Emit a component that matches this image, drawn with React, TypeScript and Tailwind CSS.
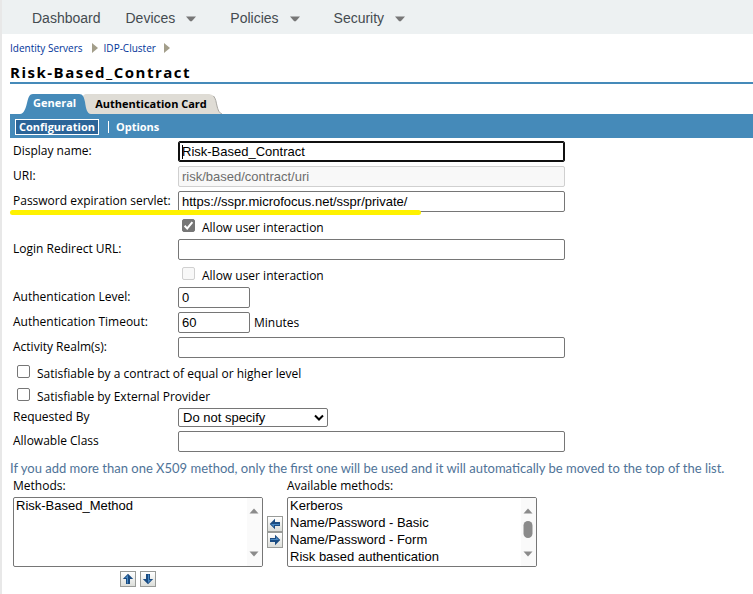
import { useState, type ReactNode } from "react"

const navItems = [
  { label: "Dashboard", menu: false },
  { label: "Devices", menu: true },
  { label: "Policies", menu: true },
  { label: "Security", menu: true },
]

const availableMethods = [
  "Kerberos",
  "Name/Password - Basic",
  "Name/Password - Form",
  "Risk based authentication",
]

const inputClass =
  "block h-[21px] rounded-[2px] border bg-white px-[3px] font-['Liberation_Sans',Arial,sans-serif] text-[13px] text-black outline-none disabled:border-[#d0d0d0] disabled:bg-[#f8f8f8] disabled:text-[#6d6d6d]"

function Caret() {
  return (
    <svg width="10" height="8" viewBox="0 0 10 8" aria-hidden="true">
      <path d="M0 2.5h10L5.8 7.2H4.2z" fill="#777" />
    </svg>
  )
}

function CrumbArrow() {
  return (
    <svg width="6" height="10" viewBox="0 0 6 10" aria-hidden="true">
      <path d="M0 0L6 5L0 10z" fill="#a39e8a" />
    </svg>
  )
}

function FormRow({ id, label, children }: { id: string; label: string; children: ReactNode }) {
  return (
    <div className="flex h-[25px] items-center">
      <label htmlFor={id} className="w-[165px] shrink-0 pb-[2px] whitespace-nowrap">
        {label}
      </label>
      {children}
    </div>
  )
}

function CheckBox({ label, checked = false, disabled = false }: { label: string; checked?: boolean; disabled?: boolean }) {
  const [on, setOn] = useState(checked)
  return (
    <label className="flex h-[23px] items-center gap-[7px] pt-1">
      <span className="relative mb-1 block size-[13px]">
        <input
          type="checkbox"
          checked={on}
          disabled={disabled}
          onChange={() => setOn(!on)}
          className="block size-[13px] appearance-none rounded-[2px] border border-[#767676] bg-white checked:bg-[#767676] disabled:border-[#d0d0d0] disabled:bg-[#f8f8f8]"
        />
        {on && (
          <svg className="pointer-events-none absolute inset-0" width="13" height="13" viewBox="0 0 13 13" aria-hidden="true">
            <path d="M2.6 6.8L5.2 9.4L10.4 3.2" fill="none" stroke="#fff" strokeWidth="2" />
          </svg>
        )}
      </span>
      {label}
    </label>
  )
}

function ScrollBar({ thumb = false }: { thumb?: boolean }) {
  return (
    <svg className="shrink-0 bg-[#fafafa]" width="15" height="68" viewBox="0 0 15 68" aria-hidden="true">
      <path d="M2.5 15.5L7 10.5l4.5 5z" fill="#8b8b8b" />
      {thumb && <rect x="2.5" y="23" width="9" height="17" rx="4.5" fill="#8b8b8b" />}
      <path d="M2.5 53.5l4.5 5l4.5-5z" fill="#8b8b8b" />
    </svg>
  )
}

function ListBox({ id, label, options, thumb }: { id: string; label: string; options: string[]; thumb?: boolean }) {
  return (
    <div className="w-[250px]">
      <label htmlFor={id} className="block h-5 leading-[18px]">
        {label}
      </label>
      <div className="flex h-[70px] overflow-hidden rounded-[2px] border border-[#767676] bg-white">
        <select
          id={id}
          multiple
          size={4}
          className="h-[68px] min-w-0 flex-1 font-['Liberation_Sans',Arial,sans-serif] text-[13px] text-black outline-none [scrollbar-width:none]"
        >
          {options.map((option) => (
            <option key={option} className="h-[17px] min-h-0 px-[2px] py-0 leading-[17px]">
              {option}
            </option>
          ))}
        </select>
        <ScrollBar thumb={thumb} />
      </div>
    </div>
  )
}

const arrowRotation = {
  left: "rotate(180 7 7)",
  right: "",
  up: "rotate(270 7 7)",
  down: "rotate(90 7 7)",
}

function ArrowButton({ direction, label }: { direction: keyof typeof arrowRotation; label: string }) {
  return (
    <button
      type="button"
      aria-label={label}
      className="flex size-4 items-center justify-center border border-[#999b98] bg-linear-to-b from-white to-[#dcdeda]"
    >
      <svg className="shrink-0" width="14" height="14" viewBox="0 0 14 14" aria-hidden="true">
        <g transform={arrowRotation[direction]}>
          <path d="M2 5H7V1.800L12.300 7L7 12.200V9H2z" fill="#1b4c82" />
          <path d="M2.500 6H8V4L11 7H2.500z" fill="#4a8ac4" />
        </g>
      </svg>
    </button>
  )
}

export default function App() {
  return (
    <div className="min-h-screen overflow-x-hidden border-l-2 border-[#e8e8e8] bg-white font-['Open_Sans',sans-serif] text-[12px] leading-4 text-black">
      <nav className="flex h-[34px] items-center gap-[25px] bg-[#edf1f2] pt-[2px] pl-[30px] font-['Liberation_Sans',Arial,sans-serif] text-[14px] text-[#444b50]">
        {navItems.map((item) => (
          <div key={item.label} className={item.menu ? "pr-[9px]" : ""}>
            <button type="button" className="flex items-center gap-[11px]">
              {item.label}
              {item.menu && <Caret />}
            </button>
          </div>
        ))}
      </nav>

      <div className="pl-2">
        <nav className="flex h-[27px] items-center text-[10px] text-[#003399]">
          <a href="#servers">Identity Servers</a>
          <span className="mr-[6px] ml-[9px]">
            <CrumbArrow />
          </span>
          <a href="#cluster">IDP-Cluster</a>
          <span className="ml-2">
            <CrumbArrow />
          </span>
        </nav>

        <h1 className="flex h-[23px] items-center border-b-2 border-[#458ab9] text-[15px] font-bold tracking-widest">
          Risk-Based_Contract
        </h1>

        <div className="flex h-[30px] items-end pl-[10px] text-[11px] font-bold">
          <a href="#general" className="z-10 flex h-5 text-white">
            <svg width="13" height="20" viewBox="0 0 13 20" aria-hidden="true">
              <path d="M0 20C4 19.5 5.5 15 7 9C8.5 3 9.5 0 13 0V20z" fill="#458ab9" />
            </svg>
            <span className="bg-[#458ab9] leading-[18px]">General</span>
            <svg width="15" height="20" viewBox="0 0 15 20" aria-hidden="true">
              <path d="M0 0H3C7 0 8 3 9 8C10 15 11 19.500 15 20H0z" fill="#458ab9" />
            </svg>
          </a>
          <a href="#card" className="-ml-[9px] flex h-5">
            <svg width="13" height="20" viewBox="0 0 13 20" aria-hidden="true">
              <path d="M0 5C0 2 2 0 5 0H13V20H0z" fill="#dfdcd5" />
            </svg>
            <span className="bg-[#dfdcd5] leading-5">Authentication Card</span>
            <svg width="16" height="20" viewBox="0 0 16 20" aria-hidden="true">
              <path d="M0 0C6 0 8 2 9 8C10.500 15 11.500 19.500 15 20H0z" fill="#dfdcd5" />
              <path d="M6.500 2C9 5 9 8 10 12C11 16 12 19 15 20" fill="none" stroke="#a8a6a1" strokeWidth="1" />
            </svg>
          </a>
        </div>

        <div className="flex h-6 items-center bg-[#458ab9] pt-[2px] pl-[5px] text-[11px] font-bold text-white">
          <a href="#configuration" className="border border-white bg-[#2b6498] px-[3px] leading-[14px]">
            Configuration
          </a>
          <span className="mr-[7px] ml-[9px] h-3 w-px bg-white" />
          <a href="#options">Options</a>
        </div>

        <form className="pt-px pl-[3px]" onSubmit={(e) => e.preventDefault()}>
          <FormRow id="name" label="Display name:">
            <div className="relative w-[387px]">
              <input
                id="name"
                defaultValue="Risk-Based_Contract"
                className={`${inputClass} w-full border-[#101010] ring-1 ring-[#101010] ring-inset`}
              />
              <span className="absolute top-1 left-1 h-[14px] w-px bg-black" />
            </div>
          </FormRow>
          <FormRow id="uri" label="URI:">
            <input id="uri" disabled defaultValue="risk/based/contract/uri" className={`${inputClass} w-[387px]`} />
          </FormRow>
          <div className="relative">
            <FormRow id="servlet" label="Password expiration servlet:">
              <input
                id="servlet"
                defaultValue="https://sspr.microfocus.net/sspr/private/"
                className={`${inputClass} w-[387px] border-[#767676]`}
              />
            </FormRow>
            <span className="absolute -bottom-px -left-[3px] h-[5px] w-[411px] rounded-full bg-[#fff200]" />
          </div>
          <div className="pl-[169px]">
            <CheckBox label="Allow user interaction" checked />
          </div>
          <FormRow id="redirect" label="Login Redirect URL:">
            <input id="redirect" className={`${inputClass} w-[387px] border-[#767676]`} />
          </FormRow>
          <div className="pl-[169px]">
            <CheckBox label="Allow user interaction" disabled />
          </div>
          <FormRow id="level" label="Authentication Level:">
            <input id="level" defaultValue="0" className={`${inputClass} w-[72px] border-[#767676]`} />
          </FormRow>
          <FormRow id="timeout" label="Authentication Timeout:">
            <input id="timeout" defaultValue="60" className={`${inputClass} w-[72px] border-[#767676]`} />
            <span className="pl-1">Minutes</span>
          </FormRow>
          <FormRow id="realm" label="Activity Realm(s):">
            <input id="realm" className={`${inputClass} w-[387px] border-[#767676]`} />
          </FormRow>
          <div className="pl-1">
            <CheckBox label="Satisfiable by a contract of equal or higher level" />
            <CheckBox label="Satisfiable by External Provider" />
          </div>
          <div className="flex h-[23px] items-center">
            <label htmlFor="requested" className="w-[165px] pb-[2px]">
              Requested By
            </label>
            <div className="relative w-[150px]">
              <select
                id="requested"
                className="block h-[19px] w-full appearance-none rounded-[2px] border border-[#767676] bg-white px-1 font-['Liberation_Sans',Arial,sans-serif] text-[13px] leading-4 text-black outline-none"
              >
                <option>Do not specify</option>
              </select>
              <svg
                className="pointer-events-none absolute top-[6px] right-1"
                width="10"
                height="8"
                viewBox="0 0 10 8"
                aria-hidden="true"
              >
                <path d="M1 1.500L5 5.500L9 1.500" fill="none" stroke="#000" strokeWidth="2" />
              </svg>
            </div>
          </div>
          <FormRow id="class" label="Allowable Class">
            <input id="class" className={`${inputClass} w-[387px] border-[#767676]`} />
          </FormRow>
        </form>

        <p className="pt-[6px] pb-px font-[Lato,sans-serif] text-[13px] leading-4 whitespace-nowrap text-[#4f7398]">
          If you add more than one X509 method, only the first one will be used and it will automatically be moved to the
          top of the list.
        </p>

        <div className="flex items-start gap-1 pl-[3px]">
          <div>
            <ListBox id="methods" label="Methods:" options={["Risk-Based_Method"]} />
            <div className="flex justify-center gap-1 pt-1">
              <ArrowButton direction="up" label="Move up" />
              <ArrowButton direction="down" label="Move down" />
            </div>
          </div>
          <div className="pt-[39px]">
            <ArrowButton direction="left" label="Add method" />
            <ArrowButton direction="right" label="Remove method" />
          </div>
          <ListBox id="available" label="Available methods:" options={availableMethods} thumb />
        </div>
      </div>
    </div>
  )
}
